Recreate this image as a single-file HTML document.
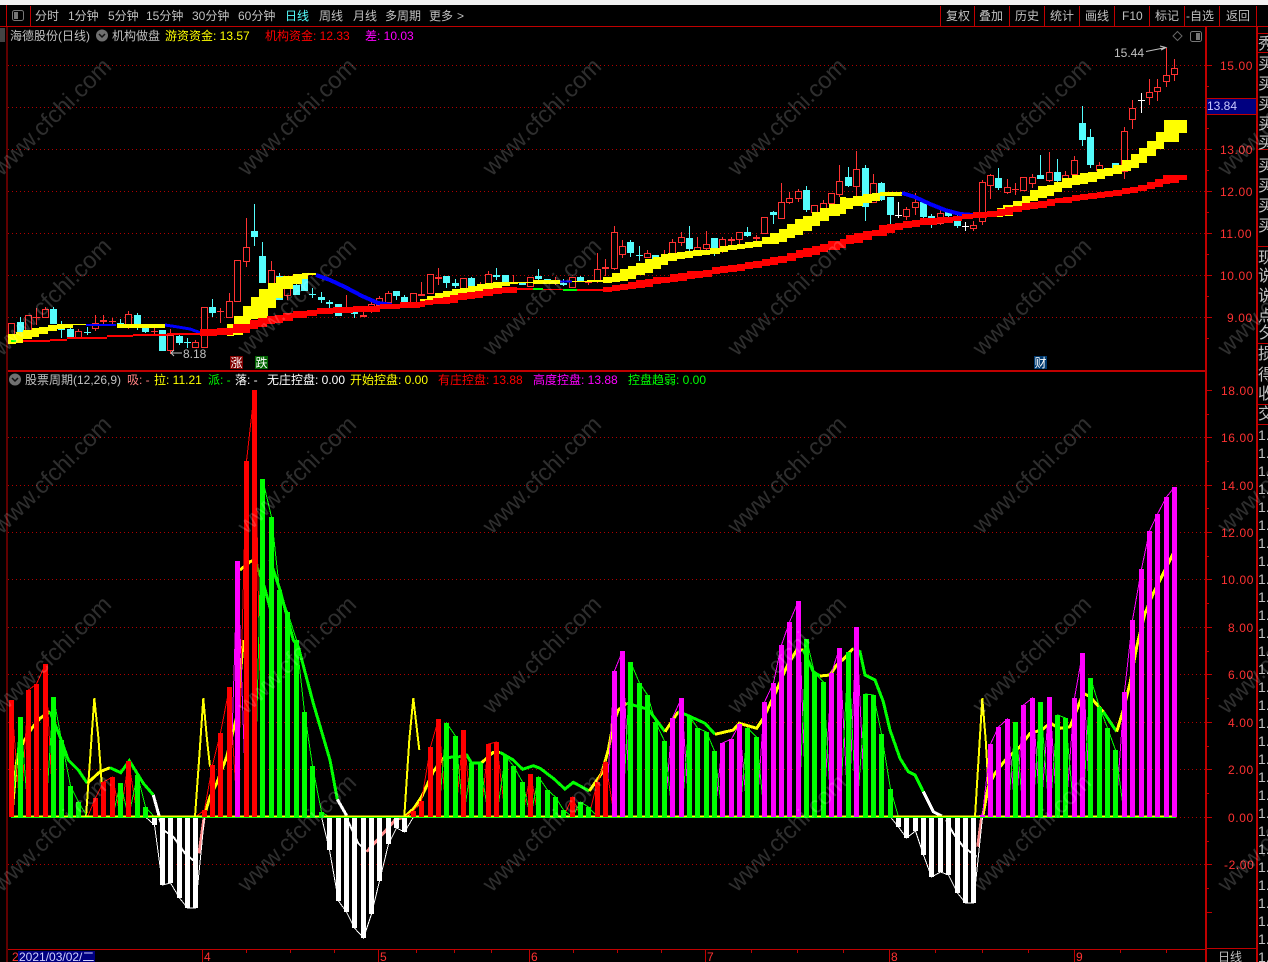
<!DOCTYPE html>
<html><head><meta charset="utf-8"><style>
html,body{margin:0;padding:0;background:#000;width:1268px;height:962px;overflow:hidden}
svg{display:block}
text{font-family:"Liberation Sans","WenQuanYi Zen Hei","Noto Sans CJK SC",sans-serif;font-size:12px;letter-spacing:0}
.g{fill:#c0c0c0}.ax{fill:#ff3232;letter-spacing:.6px}
.w{font-size:23.5px;fill:rgba(255,255,255,.18);letter-spacing:0}
.rc{font-size:16px;fill:#c0c0c0;letter-spacing:0}
.one{font-size:14px;fill:#c0c0c0;letter-spacing:0}
</style></head><body>
<svg id="s" xmlns="http://www.w3.org/2000/svg" width="1268" height="962" viewBox="0 0 1268 962">
<rect width="1268" height="962" fill="#000"/>
<rect width="1268" height="5" fill="#f0f0f0"/>
<g id="grid"></g><g id="top"></g><g id="low"></g>

<g stroke="#c00000" stroke-width="1" fill="none" shape-rendering="crispEdges">
<path d="M0 26.5H1268M7 27V962M6.5 5V27M30.5 6V26M8 370.5H1205M8 371.5H1205M8 949.5H1205M1205.5 27V962M1206.5 27V962M1256.5 6V962M1257.5 27V962M1206 948.5H1256M1206 98.5H1256M1206 114.5H1256"/>
<path d="M940.5 6V26M974.5 6V26M1009.5 6V26M1044.5 6V26M1079.5 6V26M1114.5 6V26M1149.5 6V26M1184.5 6V26M1219.5 6V26"/>
<path d="M1257 33.5H1268M1257 52.5H1268M1257 149.5H1268M1257 246.5H1268M1257 343.5H1268M1257 404.5H1268M1257 424.5H1268"/>
<path d="M1206 65.5H1212M1206 86.5H1209M1206 128.5H1209M1206 149.5H1212M1206 170.5H1209M1206 191.5H1212M1206 212.5H1209M1206 233.5H1212M1206 254.5H1209M1206 275.5H1212M1206 296.5H1209M1206 317.5H1212M1206 338.5H1209"/>
<path d="M1206 390.5H1212M1206 414.5H1209M1206 437.5H1212M1206 461.5H1209M1206 485.5H1212M1206 508.5H1209M1206 532.5H1212M1206 556.5H1209M1206 579.5H1212M1206 603.5H1209M1206 627.5H1212M1206 651.5H1209M1206 674.5H1212M1206 698.5H1209M1206 722.5H1212M1206 746.5H1209M1206 769.5H1212M1206 793.5H1209M1206 817.5H1212M1206 841.5H1209M1206 864.5H1212M1206 888.5H1209M1206 912.5H1212"/>
<path d="M202.5 950V962M378.5 950V962M529.5 950V962M705.5 950V962M889.5 950V962M1074.5 950V962M246.5 950V953M290.5 950V953M334.5 950V953M416.5 950V953M454.5 950V953M491.5 950V953M573.5 950V953M617.5 950V953M661.5 950V953M751.5 950V953M797.5 950V953M843.5 950V953M935.5 950V953M982.5 950V953M1028.5 950V953M1120.5 950V953M1166.5 950V953"/>
</g>

<rect x="1207" y="99" width="49" height="15" fill="#000080"/>
<text x="1207" y="110" fill="#c8c8ff" letter-spacing=".5">13.84</text>

<!-- toolbar -->
<rect x="12.5" y="10.5" width="11" height="10" rx="2" fill="none" stroke="#777"/><rect x="14" y="12" width="4" height="7" fill="#777"/>
<g class="g">
<text class="g" x="35" y="20">分时</text><text class="g" x="68" y="20">1分钟</text><text class="g" x="108" y="20">5分钟</text><text class="g" x="146" y="20">15分钟</text><text class="g" x="192" y="20">30分钟</text><text class="g" x="238" y="20">60分钟</text>
<text x="285" y="20" fill="#54fcfc">日线</text>
<text class="g" x="319" y="20">周线</text><text class="g" x="353" y="20">月线</text><text class="g" x="385" y="20">多周期</text><text class="g" x="429" y="20">更多</text><text class="g" x="457" y="20">&gt;</text>
<text class="g" x="946" y="20">复权</text><text class="g" x="979" y="20">叠加</text><text class="g" x="1015" y="20">历史</text><text class="g" x="1050" y="20">统计</text><text class="g" x="1085" y="20">画线</text><text class="g" x="1122" y="20">F10</text><text class="g" x="1155" y="20">标记</text><text class="g" x="1186" y="20">-自选</text><text class="g" x="1226" y="20">返回</text>
</g>
<rect x="0" y="28" width="5" height="14" fill="#444"/>

<!-- header 1 -->
<text class="g" x="10" y="40">海德股份(日线)</text>
<circle cx="102" cy="35.5" r="6" fill="#707070"/><path d="M99 34l3 3 3-3" stroke="#111" stroke-width="1.5" fill="none"/>
<text class="g" x="112" y="40">机构做盘</text>
<text x="165" y="40" fill="#ffff00">游资资金: 13.57</text>
<text x="265" y="40" fill="#ff0000">机构资金: 12.33</text>
<text x="365" y="40" fill="#ff00ff">差: 10.03</text>
<path d="M1177.5 31.5l4.500 4.500-4.500 4.500-4.500-4.500z" fill="none" stroke="#666"/>
<rect x="1190.500" y="31.500" width="11" height="10" rx="2" fill="none" stroke="#777"/><rect x="1196" y="33" width="4" height="7" fill="#777"/>

<!-- top labels -->
<text class="ax" x="1220" y="70">15.00</text><text class="ax" x="1220" y="154">13.00</text><text class="ax" x="1220" y="196">12.00</text><text class="ax" x="1220" y="238">11.00</text><text class="ax" x="1220" y="280">10.00</text><text class="ax" x="1227" y="322">9.00</text>
<text class="g" x="1114" y="57">15.44</text>
<path d="M1146 51.500L1166 47.500M1160 46L1166 47.500L1161 50" stroke="#c0c0c0" fill="none"/>
<text class="g" x="183" y="358">8.18</text>
<path d="M182 353H171M174 350L171 353L174 356" stroke="#c0c0c0" fill="none"/>
<rect x="230" y="356" width="13" height="13" fill="#800000"/><text x="230.500" y="367" fill="#fff">涨</text>
<rect x="255" y="356" width="13" height="13" fill="#006400"/><text x="255.500" y="367" fill="#fff">跌</text>
<rect x="1034" y="356" width="13" height="13" fill="#003a70"/><text x="1034.500" y="367" fill="#fff">财</text>

<!-- header 2 -->
<circle cx="15" cy="379.500" r="6" fill="#707070"/><path d="M12 378l3 3 3-3" stroke="#111" stroke-width="1.500" fill="none"/>
<text class="g" x="25" y="384">股票周期(12,26,9)</text>
<text x="127" y="384" fill="#ff8080">吸: -</text>
<text x="154" y="384" fill="#ffff00">拉: 11.21</text>
<text x="208" y="384" fill="#00ff00">派: -</text>
<text x="235" y="384" fill="#ffffff">落: -</text>
<text x="267" y="384" fill="#ffffff">无庄控盘: 0.00</text>
<text x="350" y="384" fill="#ffff00">开始控盘: 0.00</text>
<text x="438" y="384" fill="#ff0000">有庄控盘: 13.88</text>
<text x="533" y="384" fill="#ff00ff">高度控盘: 13.88</text>
<text x="628" y="384" fill="#00ff00">控盘趋弱: 0.00</text>

<!-- lower labels -->
<text class="ax" x="1221" y="395">18.00</text><text class="ax" x="1221" y="442">16.00</text><text class="ax" x="1221" y="490">14.00</text><text class="ax" x="1221" y="537">12.00</text><text class="ax" x="1221" y="584">10.00</text><text class="ax" x="1228" y="632">8.00</text><text class="ax" x="1228" y="679">6.00</text><text class="ax" x="1228" y="727">4.00</text><text class="ax" x="1228" y="774">2.00</text><text class="ax" x="1228" y="822">0.00</text><text class="ax" x="1224" y="869">-2.00</text>

<!-- bottom -->
<text fill="#ff3232" x="12" y="961">2</text>
<rect x="18" y="951" width="77" height="11" fill="#000080"/>
<text x="19" y="961" fill="#d0d0ff">2021/03/02/二</text>
<text fill="#ff3232" x="204" y="961">4</text><text fill="#ff3232" x="380" y="961">5</text><text fill="#ff3232" x="531" y="961">6</text><text fill="#ff3232" x="707" y="961">7</text><text fill="#ff3232" x="891" y="961">8</text><text fill="#ff3232" x="1076" y="961">9</text>
<text class="g" x="1218" y="961">日线</text>

<!-- right column -->
<text class="rc" x="1258" y="49">秀</text>
<text class="rc" x="1258" y="69">买</text><text class="rc" x="1258" y="89">买</text><text class="rc" x="1258" y="109">买</text><text class="rc" x="1258" y="129">买</text>
<text class="rc" x="1258" y="148">买</text>
<text class="rc" x="1258" y="171">买</text><text class="rc" x="1258" y="191">买</text><text class="rc" x="1258" y="211">买</text><text class="rc" x="1258" y="231">买</text>
<text class="rc" x="1258" y="263">现</text><text class="rc" x="1258" y="281">说</text><text class="rc" x="1258" y="301">说</text><text class="rc" x="1258" y="321">点</text><text class="rc" x="1258" y="338">夕</text>
<text class="rc" x="1258" y="359">损</text><text class="rc" x="1258" y="380">得</text><text class="rc" x="1258" y="399">收</text>
<text class="rc" x="1258" y="419">交</text>
<g>
<text class="one" x="1258" y="440">1.</text><text class="one" x="1258" y="458">1.</text><text class="one" x="1258" y="476">1.</text><text class="one" x="1258" y="494">1.</text><text class="one" x="1258" y="512">1.</text><text class="one" x="1258" y="530">1.</text><text class="one" x="1258" y="548">1.</text><text class="one" x="1258" y="566">1.</text><text class="one" x="1258" y="584">1.</text><text class="one" x="1258" y="602">1.</text><text class="one" x="1258" y="620">1.</text><text class="one" x="1258" y="638">1.</text><text class="one" x="1258" y="656">1.</text><text class="one" x="1258" y="674">1.</text><text class="one" x="1258" y="692">1.</text><text class="one" x="1258" y="710">1.</text><text class="one" x="1258" y="728">1.</text><text class="one" x="1258" y="746">1.</text><text class="one" x="1258" y="764">1.</text><text class="one" x="1258" y="782">1.</text><text class="one" x="1258" y="800">1.</text><text class="one" x="1258" y="818">1.</text><text class="one" x="1258" y="836">1.</text><text class="one" x="1258" y="854">1.</text><text class="one" x="1258" y="872">1.</text><text class="one" x="1258" y="890">1.</text><text class="one" x="1258" y="908">1.</text><text class="one" x="1258" y="926">1.</text><text class="one" x="1258" y="944">1.</text><text class="one" x="1258" y="962">1.</text>
</g>

<!-- watermark -->
<g text-anchor="middle">
<text class="w" transform="translate(51 116) rotate(-44.500)" y="9">www.cfchi.com</text><text class="w" transform="translate(296 116) rotate(-44.500)" y="9">www.cfchi.com</text><text class="w" transform="translate(541 116) rotate(-44.500)" y="9">www.cfchi.com</text><text class="w" transform="translate(786 116) rotate(-44.500)" y="9">www.cfchi.com</text><text class="w" transform="translate(1031 116) rotate(-44.500)" y="9">www.cfchi.com</text><text class="w" transform="translate(1276 116) rotate(-44.500)" y="9">www.cfchi.com</text>
<text class="w" transform="translate(51 296) rotate(-44.500)" y="9">www.cfchi.com</text><text class="w" transform="translate(296 296) rotate(-44.500)" y="9">www.cfchi.com</text><text class="w" transform="translate(541 296) rotate(-44.500)" y="9">www.cfchi.com</text><text class="w" transform="translate(786 296) rotate(-44.500)" y="9">www.cfchi.com</text><text class="w" transform="translate(1031 296) rotate(-44.500)" y="9">www.cfchi.com</text><text class="w" transform="translate(1276 296) rotate(-44.500)" y="9">www.cfchi.com</text>
<text class="w" transform="translate(51 474) rotate(-44.500)" y="9">www.cfchi.com</text><text class="w" transform="translate(296 474) rotate(-44.500)" y="9">www.cfchi.com</text><text class="w" transform="translate(541 474) rotate(-44.500)" y="9">www.cfchi.com</text><text class="w" transform="translate(786 474) rotate(-44.500)" y="9">www.cfchi.com</text><text class="w" transform="translate(1031 474) rotate(-44.500)" y="9">www.cfchi.com</text><text class="w" transform="translate(1276 474) rotate(-44.500)" y="9">www.cfchi.com</text>
<text class="w" transform="translate(51 654) rotate(-44.500)" y="9">www.cfchi.com</text><text class="w" transform="translate(296 654) rotate(-44.500)" y="9">www.cfchi.com</text><text class="w" transform="translate(541 654) rotate(-44.500)" y="9">www.cfchi.com</text><text class="w" transform="translate(786 654) rotate(-44.500)" y="9">www.cfchi.com</text><text class="w" transform="translate(1031 654) rotate(-44.500)" y="9">www.cfchi.com</text><text class="w" transform="translate(1276 654) rotate(-44.500)" y="9">www.cfchi.com</text>
<text class="w" transform="translate(51 832) rotate(-44.500)" y="9">www.cfchi.com</text><text class="w" transform="translate(296 832) rotate(-44.500)" y="9">www.cfchi.com</text><text class="w" transform="translate(541 832) rotate(-44.500)" y="9">www.cfchi.com</text><text class="w" transform="translate(786 832) rotate(-44.500)" y="9">www.cfchi.com</text><text class="w" transform="translate(1031 832) rotate(-44.500)" y="9">www.cfchi.com</text><text class="w" transform="translate(1276 832) rotate(-44.500)" y="9">www.cfchi.com</text>
</g>
</svg>
<script>
(function(){
var NS='http://www.w3.org/2000/svg';
function el(p,n,a){var e=document.createElementNS(NS,n);for(var k in a)e.setAttribute(k,a[k]);document.getElementById(p).appendChild(e);return e}
function X(i){return Math.round(11.3+8.365*i)}
function rect(p,x,y,w,h,f){el(p,'rect',{x:x,y:y,width:w,height:h,fill:f,'shape-rendering':'crispEdges'})}
function line(p,d,c,sw,dash){var a={d:d,stroke:c,'stroke-width':sw||1,fill:'none','shape-rendering':'crispEdges'};if(dash)a['stroke-dasharray']=dash;el(p,'path',a)}

/* grid */
[65,107,149,191,233,275,317,437,485,532,579,627,674,722,769,864].forEach(function(y){line('grid','M8 '+(y+.5)+'H1205','#b00000',1,'1 3')});
line('grid','M1176 817.5H1205','#b00000',1,'1 3');

/* candles: hi top bot lo colour */
var c=[[323,323,343,343,'r'],[317,322,332,337,'c'],[315,315,330,332,'r'],[308,317,318,325,'r'],[307,309,317,317,'r'],[307,309,324,324,'c'],[321,328,330,338,'c'],[326,329,337,337,'c'],[329,331,337,337,'r'],[327,332,333,335,'c'],[315,323,328,331,'r'],[315,320,322,324,'r'],[318,321,322,324,'r'],[319,323,324,327,'c'],[311,314,325,329,'r'],[313,315,324,330,'c'],[328,328,332,333,'c'],[327,331,332,335,'r'],[330,330,351,351,'c'],[329,335,350,354,'r'],[333,336,343,345,'c'],[338,342,343,348,'c'],[340,342,347,348,'r'],[307,307,347,347,'r'],[299,307,313,317,'c'],[308,311,312,323,'r'],[293,301,317,318,'r'],[260,260,301,302,'r'],[218,247,261,267,'r'],[204,231,237,246,'c'],[242,256,283,283,'c'],[261,270,283,290,'r'],[273,276,300,300,'c'],[280,285,295,300,'r'],[280,285,295,288,'c'],[278,278,291,291,'c'],[288,294,295,298,'c'],[292,297,300,303,'c'],[300,302,304,308,'c'],[304,304,316,316,'c'],[295,308,309,310,'r'],[307,307,314,318,'c'],[311,315,317,317,'r'],[302,304,308,313,'r'],[296,298,305,308,'r'],[291,293,302,303,'r'],[291,291,296,300,'c'],[295,297,303,303,'c'],[293,293,303,303,'r'],[282,294,296,296,'r'],[274,274,293,293,'r'],[268,277,279,285,'r'],[276,276,283,288,'c'],[279,283,286,288,'c'],[278,278,288,288,'r'],[277,278,287,287,'c'],[282,284,292,293,'r'],[271,274,283,283,'r'],[268,275,277,280,'c'],[275,275,282,284,'c'],[275,282,283,284,'r'],[283,283,285,285,'c'],[277,277,286,287,'r'],[269,276,279,283,'c'],[279,279,282,284,'c'],[277,282,283,285,'r'],[279,283,285,286,'c'],[277,277,287,287,'r'],[276,277,282,282,'c'],[280,281,283,285,'r'],[253,269,280,283,'r'],[259,267,269,276,'r'],[226,232,268,270,'r'],[240,246,254,258,'r'],[240,242,253,257,'c'],[246,255,256,261,'c'],[250,253,257,257,'r'],[255,255,262,269,'c'],[250,258,262,265,'r'],[239,242,253,261,'r'],[232,237,242,246,'r'],[226,238,249,251,'c'],[237,247,250,252,'r'],[231,244,248,250,'r'],[238,238,250,256,'c'],[237,239,247,253,'r'],[237,239,241,245,'r'],[232,232,239,244,'r'],[227,232,236,237,'c'],[235,237,239,241,'r'],[217,217,233,234,'r'],[211,212,215,224,'c'],[183,202,218,219,'r'],[192,198,202,204,'r'],[189,191,198,202,'r'],[186,190,210,212,'c'],[205,205,212,212,'r'],[200,203,212,215,'r'],[193,193,203,205,'r'],[165,181,194,197,'r'],[167,177,186,187,'c'],[151,169,186,200,'r'],[165,168,207,221,'c'],[174,183,202,203,'r'],[182,183,200,201,'c'],[197,197,215,225,'c'],[202,215,216,218,'w'],[207,209,216,220,'r'],[193,202,207,215,'r'],[200,202,217,219,'c'],[214,216,219,228,'c'],[210,213,223,225,'r'],[210,212,216,218,'c'],[215,220,226,228,'c'],[222,226,227,231,'w'],[221,225,228,231,'r'],[180,182,221,225,'r'],[174,175,185,199,'r'],[168,178,188,190,'c'],[179,187,192,194,'r'],[183,189,190,195,'r'],[177,177,190,191,'r'],[174,177,183,188,'r'],[155,175,179,179,'c'],[152,172,180,182,'r'],[159,172,181,183,'c'],[171,175,179,181,'r'],[156,160,174,175,'r'],[106,123,140,146,'c'],[129,137,165,168,'c'],[162,165,170,170,'r'],[168,168,175,176,'c'],[163,163,173,173,'c'],[127,131,171,179,'r'],[100,108,119,129,'r'],[93,100,101,113,'w'],[79,92,97,105,'r'],[79,87,91,101,'r'],[48,75,81,87,'r'],[59,68,74,81,'r']];
c.forEach(function(k,i){var x=X(i),col=k[4]=='r'?'#ff3232':(k[4]=='c'?'#54fcfc':'#ffffff');
 line('top','M'+(x+.5)+' '+k[0]+'V'+k[3],col);
 if(k[4]=='r'&&k[2]-k[1]>2){el('top','rect',{x:x-2.5,y:k[1]+.5,width:6,height:k[2]-k[1],fill:'#000',stroke:col,'shape-rendering':'crispEdges'})}
 else rect('top',x-3,k[1],7,Math.max(k[2]-k[1],1),col);
});

/* ribbons in zoom coords: u1,u2,v1,v2; pad grows thick steps */
function rib(col,x0,y0,a,pt,pb){for(var i=0;i<a.length;i+=4){var x=Math.round(x0+a[i]/3),w=Math.round(x0+a[i+1]/3)-x,y=Math.round(y0+a[i+2]/3),h=Math.max(1,Math.round(y0+a[i+3]/3)-y);if(h>=3){y-=(pt||0);h+=(pt||0)+(pb||0)}rect('top',x,y,w,h,col)}}
rib('#ffff00',0,180,[24,48,462,488,48,70,456,485,70,95,450,475,95,118,445,468,118,143,442,460,143,170,435,450,170,195,433,445,195,220,433,440,220,258,432,436,350,495,433,440,600,680,460,465,680,703,433,465,703,728,408,462,728,752,378,430,752,777,350,415,777,803,327,410,803,828,308,380,828,850,292,352,850,878,287,325,878,905,282,310,905,925,280,293,925,948,280,285,1230,1260,365,382],0,1);
rib('#ffff00',420,130,[0,20,507,520,20,45,497,510,45,70,490,505,70,95,483,500,95,120,477,495,120,145,473,490,145,170,468,485,170,195,461,480,195,220,460,475,220,245,456,470,245,270,455,465,270,295,455,462,295,340,455,460,340,420,450,458,455,500,453,456,500,550,450,457,550,575,440,455,575,600,430,452,600,625,418,450,625,648,408,444,648,675,400,432,675,700,388,425,700,723,380,415,723,745,373,402,745,770,370,390,770,795,367,385,795,820,363,380,820,845,360,375,845,870,360,372,870,900,355,368,900,925,348,362,925,950,345,358,950,975,343,355,975,1000,337,350,1000,1025,333,347,1025,1050,322,340,1050,1077,310,338,1077,1100,297,332,1100,1125,282,322,1125,1150,267,312,1150,1175,258,300,1175,1200,247,285,1200,1228,235,270,1228,1260,222,255],0,1);
rib('#ffff00',840,120,[0,18,230,280,18,40,235,265,40,70,228,255,70,95,222,245,95,120,218,240,120,185,215,225,440,490,285,290,470,490,265,285,490,520,255,285,520,545,243,270,545,570,228,255,570,595,210,240,595,620,198,232,620,643,195,225,643,665,185,212,665,695,175,200,695,720,165,192,720,745,160,188,745,770,155,183,770,795,148,175,795,820,143,165,820,845,135,160,845,872,120,150,872,897,103,140,897,922,83,125,922,948,62,105,948,973,35,85,973,1017,0,63,1017,1040,0,35],0,1);
/* blue parts */
line('top','M86 325L116 325','#0000ff',2);
line('top','M165 325L178 327L190 329L201 333','#0000ff',3);
line('top','M316 275L330 280L345 287L362 296L378 303L392 305','#0000ff',4);
line('top','M902 193L915 197L930 204L945 210L960 214L973 215','#0000ff',4);
line('top','M560 281.500H572','#0000ff',2);
rib('#ff0000',0,180,[70,150,480,485,150,200,478,482,200,320,472,478,320,400,465,472,400,500,462,468,500,600,458,464,600,650,450,465,650,700,447,463,700,750,435,455,750,775,422,445,775,800,418,438,800,825,412,430,825,850,408,425,850,880,403,420,880,920,397,412,920,950,393,405,950,1000,388,400,1000,1060,385,395,1060,1140,380,392,1140,1200,375,385,1200,1260,370,380],1,1);
rib('#ff0000',420,130,[0,15,515,527,15,40,513,523,40,70,507,520,70,90,503,518,90,115,497,515,115,140,492,508,140,165,490,505,165,190,485,500,190,220,480,495,220,245,476,490,245,290,473,485,290,340,473,480,370,430,477,479,470,550,478,483,550,575,473,483,575,600,468,480,600,625,465,478,625,648,460,475,648,675,453,470,675,700,450,467,700,723,445,460,723,750,443,457,750,775,435,453,775,800,433,450,800,825,427,443,825,850,425,440,850,875,422,437,875,900,415,430,900,925,412,427,925,950,408,423,950,975,405,420,975,1000,400,415,1000,1025,397,412,1025,1050,390,405,1050,1075,385,402,1075,1100,380,397,1100,1128,373,390,1128,1150,363,382,1150,1175,358,378,1175,1200,352,372,1200,1225,345,362,1225,1260,335,358],1,1);
rib('#00ff00',420,130,[340,370,474,479,430,470,477,483]);
rib('#00ff00',0,180,[33,48,480,485]);
rib('#ff0000',840,120,[0,18,360,382,18,42,347,370,42,70,342,365,70,95,335,358,95,118,332,345,118,140,318,345,140,165,315,335,165,190,312,328,190,215,305,322,215,240,302,318,240,290,298,312,290,340,293,305,340,365,290,300,365,400,285,295,400,440,280,290,440,470,275,288,470,495,270,285,495,520,265,282,520,545,260,272,545,570,253,268,570,595,250,265,595,620,245,260,620,645,240,255,645,670,237,247,670,695,233,245,695,720,228,240,720,745,225,237,745,770,222,235,770,795,218,230,795,820,215,228,820,845,213,225,845,870,208,220,870,895,205,215,895,920,197,210,920,945,190,205,945,970,180,197,970,990,168,190,990,1017,168,185,1017,1040,168,178],1,1);

/* lower */
function poly(col,w,x0,y0,a){var d='';for(var i=0;i<a.length;i+=2)d+=(i?'L':'M')+(x0+a[i]/3).toFixed(1)+' '+(y0+a[i+1]/3).toFixed(1);line('low',d,col,w)}
var Y='#ffff00',G='#00ff00',W='#ffffff',P='#ff8c8c';
poly(Y,3,0,640,[35,530,50,360,68,310,95,265,120,235,150,215]);
poly(G,3,0,640,[150,215,180,290,205,360,235,390,262,430]);
poly(Y,3,0,640,[262,430,300,395,330,383]);
poly(G,3,0,640,[330,383,362,398,388,362,430,430,460,465]);
poly(W,3,0,640,[460,465,478,530]);
poly(W,2,0,640,[478,535,490,570,520,590,555,640,590,670]);
poly(P,3,0,640,[597,640,612,535]);
poly(Y,3,0,640,[612,530,630,470,650,430,680,350,710,230,730,0]);
poly(Y,3,0,370,[720,600,750,575,763,570]);
poly(G,3,0,640,[810,-240,840,-150,880,0,895,20,940,190,990,360,1012,478]);
poly(W,3,0,640,[1012,478,1040,527]);
poly(W,2,0,640,[1040,535,1075,610,1100,635]);
poly(P,3,0,640,[1100,635,1150,580,1185,540,1215,530]);
poly(Y,3,0,640,[1215,530,1258,490]);
poly(G,3,0,370,[763,570,790,640,812,720]);
poly(Y,3,400,590,[15,680,38,660,65,620,100,545,130,503]);
poly(G,3,400,590,[130,503,180,500,200,495,215,520,245,518]);
poly(Y,3,400,590,[245,518,280,487,300,487]);
poly(G,3,400,590,[300,487,340,510,368,538,400,527,420,535,460,565,495,597,520,577,568,603]);
poly(Y,3,400,590,[568,603,605,550,625,480,640,400,655,360,680,340]);
poly(G,3,400,590,[680,340,745,358,795,425]);
poly(Y,3,400,590,[795,425,835,365]);
poly(G,3,400,590,[835,365,860,375,915,400,945,433]);
poly(Y,3,400,590,[945,433,1000,420,1018,400,1070,415,1090,385,1130,300,1160,230,1190,180,1210,180]);
poly(G,3,400,590,[1210,180,1240,245,1260,258]);
poly(Y,3,820,590,[0,258,30,255,50,225,70,208,100,175]);
poly(G,3,820,590,[100,175,120,185,135,255,165,270,190,335,210,420,240,505,265,545,285,555,310,605]);
poly(W,3,820,590,[310,605,340,665,365,678]);
poly(W,2,820,590,[378,690,400,730,430,770,470,800]);
poly(P,3,820,590,[473,770,485,680]);
poly(Y,3,820,590,[488,680,505,590,525,550,560,505,600,470,630,430,665,420,690,400,720,415,750,410,770,360,790,310,810,320,850,365]);
poly(G,3,820,590,[850,365,890,425]);
poly(Y,3,820,590,[890,425,910,360,930,280,950,170,975,70,1000,10,1035,-60,1060,-110]);
/* thin spikes */
poly(Y,2,0,640,[258,530,272,330,283,175,295,290,305,430]);
poly(Y,2,0,640,[585,530,598,350,610,175,620,290,630,380]);
poly(Y,2,0,640,[1213,530,1228,300,1240,175,1258,330]);
poly(Y,2,820,590,[465,680,475,520,487,325,497,450,507,620]);

/* bars */
var b='r700 g717 r690 r684 r664 g697 g740 g786 g802 n r798 r782 r777 g783 r761 g775 g807 w825 w885 w883 w898 w908 w908 r810 r765 r733 r687 m561 r461 r390 g479 g517 g590 g612 g640 g712 g766 g812 w850 w901 w912 w928 w938 w914 w881 w844 w828 w832 r811 r801 r747 r719 g723 g736 r730 g763 g763 r744 r742 g756 g766 g782 r774 g777 g790 g797 g810 r797 g802 g807 r782 r762 m671 m651 g662 g683 g695 g722 g741 m718 m698 g716 g728 g732 g751 m743 m739 m724 g728 g737 m702 m683 m645 m622 m601 g639 g673 g682 m673 m648 g652 m627 g694 g695 g734 g789 w827 w838 w831 w855 w877 w872 w875 w893 w903 w903 m815 m744 m727 m719 g722 m705 m698 g702 m697 g715 g718 m698 m653 g678 g707 g728 g750 m692 m620 m569 m531 m514 m497 m487'.split(' ');
var col={r:'#ff0000',g:'#00ff00',m:'#ff00ff',w:'#ffffff'},Z=817;
['r','m','g','w'].forEach(function(k){var d='';b.forEach(function(s,i){var t=s[0]==k?+s.slice(1):Z;d+=(i?'L':'M')+(X(i)+.5)+' '+t});line('low',d,col[k],1)});
line('low','M11 816.500H1176',Y,2);
b.forEach(function(s,i){if(s=='n')return;var t=+s.slice(1),x=X(i)-2;if(t<Z)rect('low',x,t,5,Z-t,col[s[0]]);else rect('low',x,Z,5,t-Z,col[s[0]])});
line('low','M11 817.500H1176',G,1);
})();
</script>
</body></html>
